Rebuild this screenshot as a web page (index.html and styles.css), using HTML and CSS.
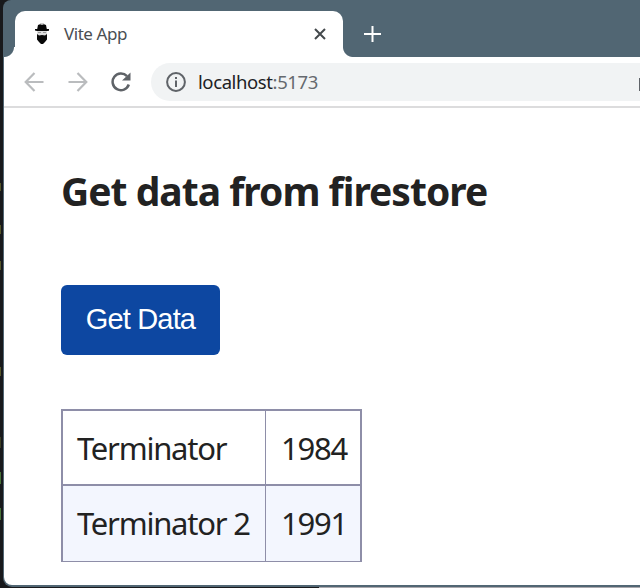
FILE: index.html
```
<!DOCTYPE html>
<html lang="en">
<head>
<meta charset="utf-8">
<title>Vite App</title>
<link rel="stylesheet" href="styles.css">
</head>
<body>
<div class="desktop">
  <div class="editor-edge">
    <i class="code c1"></i><i class="code c2"></i><i class="code c3"></i><i class="code c4"></i><i class="code c5"></i><i class="code c6 green"></i><i class="code c7 green"></i>
  </div>
  <div class="window">
    <header class="tabstrip">
      <div class="tab">
        <svg class="favicon" width="14" height="22" viewBox="0 0 14 22"><path fill="#ccc" d="M5 0h4v3H5z"/><path fill="#ddd" d="M2 7h10v7H2z"/><path fill="#080808" d="M3 2l2-.8L7 2l2-.8 2 .8.8 4H14v1.700L12 8H2L0 7.500V6h2.200z"/><path fill="#999" d="M3 9h3v1H3zM8 9h3v1H8z"/><path fill="#080808" d="M2 11l2 1.500L7 12l3 .5 2-1.500v5.500L10 19l-2 2H6l-2-2-2-2.500z"/></svg>
        <span class="tab-title">Vite App</span>
        <svg class="close" width="12" height="12" viewBox="0 0 12 12"><path d="M1 1l10 10M11 1L1 11" stroke="#44494c" stroke-width="2"/></svg>
      </div>
      <svg class="plus" width="17" height="16" viewBox="0 0 17 16"><path d="M0 8h17M8.500 0v16" stroke="#fff" stroke-width="2"/></svg>
    </header>
    <nav class="toolbar">
      <svg class="arrow" width="20" height="20" viewBox="0 0 20 20"><path d="M19.500 10H2M10.500 1L1.700 10l8.800 9" fill="none" stroke="#babcbe" stroke-width="2.200"/></svg>
      <svg class="arrow" width="20" height="20" viewBox="0 0 20 20"><path d="M.5 10H18M9.500 1l8.800 9-8.800 9" fill="none" stroke="#babcbe" stroke-width="2.200"/></svg>
      <svg class="reload" width="20" height="20" viewBox="0 0 20 20"><path d="M17.800 12.500A8.300 8.300 0 1 1 16 4.200" fill="none" stroke="#5f6368" stroke-width="2.500"/><path d="M19.500.5v8H11z" fill="#5f6368"/></svg>
      <div class="omnibox">
        <svg class="info" width="20" height="20" viewBox="0 0 20 20"><circle cx="10" cy="10" r="8.900" fill="none" stroke="#5f6368" stroke-width="2"/><path d="M10 5v2M10 8.500V15" stroke="#5f6368" stroke-width="2"/></svg>
        <span class="url">localhost<span class="port">:5173</span></span>
        <i class="action"></i>
      </div>
    </nav>
    <main class="page">
      <h1>Get data from firestore</h1>
      <button type="button">Get Data</button>
      <div class="table">
        <div class="cell name">Terminator</div><div class="cell year">1984</div>
        <div class="cell name alt">Terminator 2</div><div class="cell year alt">1991</div>
      </div>
    </main>
  </div>
  <div class="taskbar"></div>
</div>
</body>
</html>
```
FILE: styles.css
```
* { box-sizing: border-box; }
body { margin: 0; overflow: hidden; font-family: "Noto Sans", sans-serif; color: #222; }
svg { display: block; flex: none; }
.desktop { position: relative; width: 640px; height: 588px; overflow: hidden; background: #18191c; }
.editor-edge { position: absolute; left: 0; top: 0; width: 3px; height: 588px; }
.code { position: absolute; left: 0; width: 1px; height: 9px; background: #55562a; }
.green { width: 1px; height: 12px; background: #477238; }
.c1 { top: 183px; height: 8px; }
.c2 { top: 225px; }
.c3 { top: 261px; }
.c4 { top: 367px; }
.c5 { top: 437px; height: 11px; opacity: .6; }
.c6 { top: 472px; }
.c7 { top: 508px; }

.window {
  display: flex; flex-direction: column;
  width: 646px; height: 587px; margin-left: 3px;
  padding: 0 0 2px 1px;
  background: #516673;
  border-radius: 8px 0 0 9px;
}
.tabstrip { display: flex; flex: none; height: 57px; padding: 11px 0 0 11px; }
.tab {
  position: relative;
  display: flex; align-items: center;
  width: 328px; height: 46px; padding: 0 17px 0 20px;
  background: #fff; border-radius: 10px 10px 0 0;
}
.tab::before, .tab::after {
  content: ""; position: absolute; bottom: 0; width: 11px; height: 10px;
}
.tab::before { left: -11px; background: radial-gradient(circle at 0 0, #516673 9.500px, #fff 10.500px); }
.tab::after { right: -10px; width: 10px; background: radial-gradient(circle at 100% 0, #516673 9.500px, #fff 10.500px); }
.tab-title { margin: -2px 0 0 15px; font-size: 17px; letter-spacing: -.45px; color: #4a4e52; white-space: nowrap; }
.close { margin-left: auto; }
.plus { margin: 15px 0 0 21px; }

.toolbar {
  display: flex; align-items: center; flex: none;
  height: 51px; padding: 1px 0 0 20px;
  background: #fff; border-bottom: 2px solid #dcdcdd;
}
.arrow { margin-right: 24px; }
.arrow + .arrow { margin-right: 23px; }
.omnibox {
  position: relative; display: flex; align-items: center;
  flex: 1; height: 38px; margin-left: 20px; padding-left: 15px;
  background: #f1f3f4; border-radius: 19px 0 0 19px;
}
.url { margin: -1px 0 0 12px; font-size: 18.500px; letter-spacing: -.4px; color: #202124; white-space: nowrap; }
.port { color: #65696e; }
.action { position: absolute; left: 488px; top: 15px; width: 1px; height: 13px; background: #5f6368; }

.page {
  display: flex; flex-direction: column; align-items: flex-start; flex: 1;
  padding: 56px 0 0 57px; background: #fff; border-radius: 0 0 0 8px;
}
h1 { margin: 0; height: 54px; font-size: 39px; line-height: 54px; font-weight: 700; letter-spacing: -.98px; white-space: nowrap; }
button {
  width: 159px; height: 70px; margin: 67px 0 0; padding: 0 0 2px;
  border: 0; border-radius: 6px; background: #0d47a1; color: #fff;
  font: 29px/66px "Liberation Sans", sans-serif; letter-spacing: -.85px; white-space: nowrap;
}
.table {
  display: grid; grid-template-columns: 203px 94px; grid-template-rows: 73px 77px;
  width: 301px; height: 153px; margin-top: 54px;
  border: solid #8e8ea8; border-width: 2px 2px 1px;
}
.cell { padding-left: 14px; font-size: 31px; line-height: 74px; letter-spacing: -1.230px; white-space: nowrap; }
.year { padding-left: 15px; letter-spacing: -1.200px; }
.name { border-right: 1px solid #8e8ea8; }
.alt { border-top: 2px solid #8e8ea8; background: #f3f6fe; line-height: 75px; }
.taskbar { height: 1px; margin-left: 319px; background: #aaa8ad; }
```
